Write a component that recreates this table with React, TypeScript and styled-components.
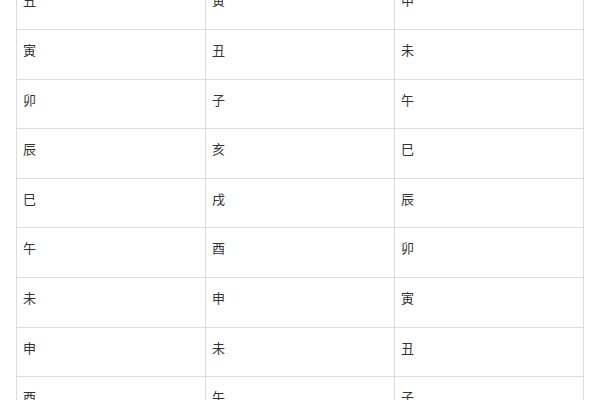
import React from "react";
import styled, { createGlobalStyle } from "styled-components";

const Global = createGlobalStyle`
  html, body { margin: 0; padding: 0; background: #fff; overflow: hidden; }
  body { font-family: "Noto Sans CJK SC", "Noto Sans", sans-serif; }
`;

const Page = styled.div`
  width: 600px;
  height: 400px;
  overflow: hidden;
  padding: 0 16px;
  box-sizing: border-box;
`;

const Table = styled.table`
  width: 568px;
  margin-top: -20.6px;
  border-collapse: collapse;
  table-layout: fixed;
  font-size: 13px;
  color: #333;
`;

const Cell = styled.td`
  border: 1px solid #dcdcdc;
  padding: 11px 6px 19px;
  line-height: 18.6px;
  text-align: left;
  vertical-align: middle;
`;

const rows: string[][] = [
  ["丑", "寅", "申"],
  ["寅", "丑", "未"],
  ["卯", "子", "午"],
  ["辰", "亥", "巳"],
  ["巳", "戌", "辰"],
  ["午", "酉", "卯"],
  ["未", "申", "寅"],
  ["申", "未", "丑"],
  ["酉", "午", "子"],
];

export default function App() {
  return (
    <>
      <Global />
      <Page>
        <Table>
          <tbody>
            {rows.map((r, i) => (
              <tr key={i}>
                {r.map((c, j) => (
                  <Cell key={j}>{c}</Cell>
                ))}
              </tr>
            ))}
          </tbody>
        </Table>
      </Page>
    </>
  );
}
